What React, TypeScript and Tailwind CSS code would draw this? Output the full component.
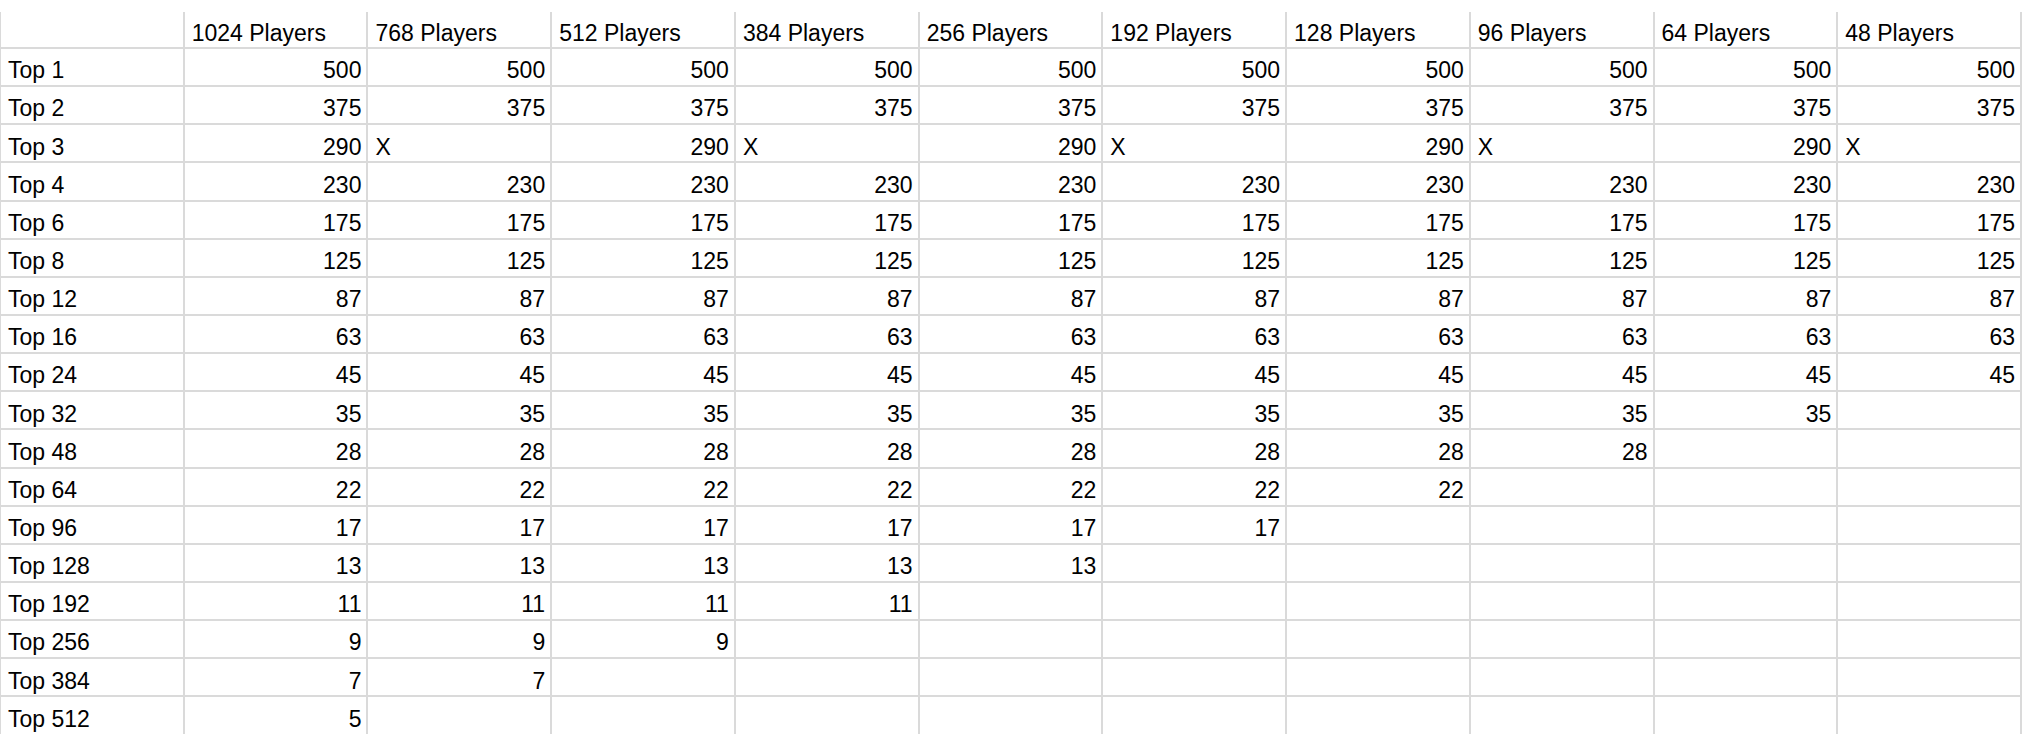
import React from "react";

const headers = ["1024", "768", "512", "384", "256", "192", "128", "96", "64", "48"].map((n) => `${n} Players`);

type Row = { label: string; cells: string[] };

const full = (v: string, count: number) => Array.from({ length: 10 }, (_, i) => (i < count ? v : ""));

const rows: Row[] = [
  { label: "Top 1", cells: full("500", 10) },
  { label: "Top 2", cells: full("375", 10) },
  { label: "Top 3", cells: Array.from({ length: 10 }, (_, i) => (i % 2 === 0 ? "290" : "X")) },
  { label: "Top 4", cells: full("230", 10) },
  { label: "Top 6", cells: full("175", 10) },
  { label: "Top 8", cells: full("125", 10) },
  { label: "Top 12", cells: full("87", 10) },
  { label: "Top 16", cells: full("63", 10) },
  { label: "Top 24", cells: full("45", 10) },
  { label: "Top 32", cells: full("35", 9) },
  { label: "Top 48", cells: full("28", 8) },
  { label: "Top 64", cells: full("22", 7) },
  { label: "Top 96", cells: full("17", 6) },
  { label: "Top 128", cells: full("13", 5) },
  { label: "Top 192", cells: full("11", 4) },
  { label: "Top 256", cells: full("9", 3) },
  { label: "Top 384", cells: full("7", 2) },
  { label: "Top 512", cells: full("5", 1) },
];

const cellBase =
  "border-r-2 border-b-2 border-[#dadada] flex items-center pt-[7px] whitespace-nowrap overflow-hidden";

export default function App() {
  return (
    <div
      className="w-[2022px] h-[734px] overflow-hidden bg-white pt-3 text-black text-[23px]"
      style={{ fontFamily: '"Liberation Sans", Arial, sans-serif' }}
    >
      <div className="grid grid-cols-11 border-l border-[#dadada]">
        <div className={`${cellBase} h-[37px] pl-[7px]`}></div>
        {headers.map((h) => (
          <div key={h} className={`${cellBase} h-[37px] pl-[7px]`}>
            {h}
          </div>
        ))}
        {rows.map((r) => (
          <React.Fragment key={r.label}>
            <div className={`${cellBase} h-[38.15px] pl-[7px]`}>{r.label}</div>
            {r.cells.map((c, i) => (
              <div
                key={i}
                className={`${cellBase} h-[38.15px] ${c === "X" ? "justify-start pl-[7px]" : "justify-end pr-[5px]"}`}
              >
                {c}
              </div>
            ))}
          </React.Fragment>
        ))}
      </div>
    </div>
  );
}
